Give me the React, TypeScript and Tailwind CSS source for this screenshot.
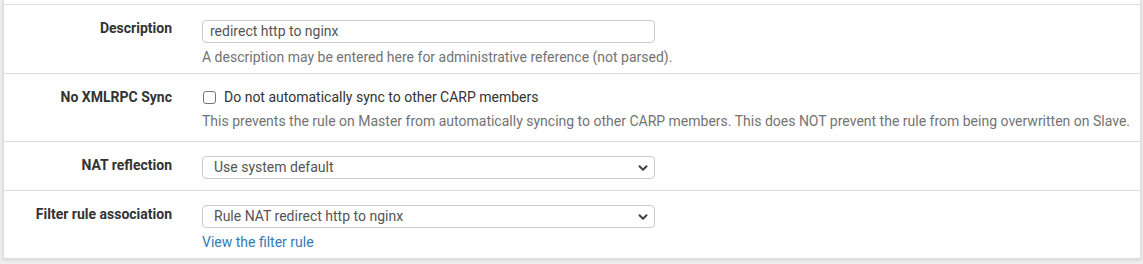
import { ChevronDown } from 'lucide-react';

const font = { fontFamily: 'Roboto, "Liberation Sans", sans-serif' };

function Label({ children }: { children: React.ReactNode }) {
  return (
    <div className="w-[168px] shrink-0 text-right pt-[13px] text-[14px] leading-[20px] font-bold text-[#333]">
      {children}
    </div>
  );
}

function Select({ value }: { value: string }) {
  return (
    <div className="w-[453px] h-[23px] border border-[#ccc] rounded-[4px] bg-white flex items-center justify-between pl-[11px] pr-[4px] text-[14px] text-[#555]">
      <span>{value}</span>
      <ChevronDown size={14} strokeWidth={3.5} className="text-[#444]" />
    </div>
  );
}

export default function App() {
  return (
    <div className="bg-[#eee] pl-[3px] pr-[2px] pb-[6px] w-[1143px] h-[264px]" style={font}>
      <div className="bg-white border-x border-b border-[#ddd] shadow-[0_1px_3px_rgba(0,0,0,0.12)]">
        <div className="h-[4px]" />

        {/* Description */}
        <div className="flex border-t border-[#ddd] h-[69px]">
          <Label>Description</Label>
          <div className="pl-[30px] pt-[15px]">
            <div className="w-[453px] h-[23px] border border-[#ccc] rounded-[4px] flex items-center px-[7px] text-[14px] text-[#555]">
              redirect http to nginx
            </div>
            <div className="mt-[4px] leading-[20px] text-[14px] text-[#737373]">
              A description may be entered here for administrative reference (not parsed).
            </div>
          </div>
        </div>

        {/* No XMLRPC Sync */}
        <div className="flex border-t border-[#ddd] h-[68px]">
          <Label>No XMLRPC Sync</Label>
          <div className="pl-[30px] pt-[13px]">
            <label className="flex items-center h-[20px] text-[14px] text-[#333]">
              <span className="w-[13px] h-[13px] border border-[#767676] rounded-[3px] ml-[1px] mr-[8px]" />
              Do not automatically sync to other CARP members
            </label>
            <div className="mt-[4px] leading-[20px] text-[14px] text-[#737373] whitespace-nowrap">
              This prevents the rule on Master from automatically syncing to other CARP members. This does NOT prevent the rule from being overwritten on Slave.
            </div>
          </div>
        </div>

        {/* NAT reflection */}
        <div className="flex border-t border-[#ddd] h-[49px]">
          <Label>NAT reflection</Label>
          <div className="pl-[30px] pt-[14px]">
            <Select value="Use system default" />
          </div>
        </div>

        {/* Filter rule association */}
        <div className="flex border-t border-[#ddd] h-[68px]">
          <Label>Filter rule association</Label>
          <div className="pl-[30px] pt-[14px]">
            <Select value="Rule NAT redirect http to nginx" />
            <a className="block mt-[4px] leading-[20px] text-[14px] text-[#337ab7]">View the filter rule</a>
          </div>
        </div>
      </div>
    </div>
  );
}
